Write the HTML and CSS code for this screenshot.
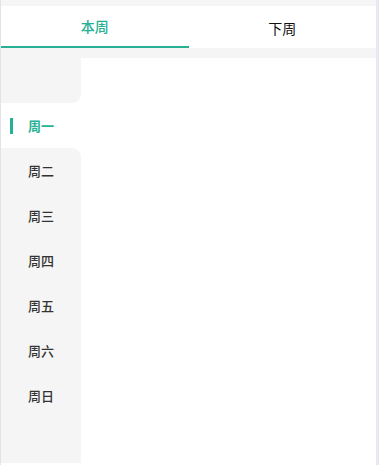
FILE: index.html
```html
<!DOCTYPE html>
<html>
<head>
<meta charset="utf-8">
<link rel="stylesheet" href="styles.css">
</head>
<body>
<div class="app">
  <div class="topgap"></div>
  <div class="tabs">
    <div class="tab active">本周</div>
    <div class="tab">下周</div>
  </div>
  <div class="band"></div>
  <div class="main">
    <div class="side">
      <div class="item pre"></div>
      <div class="item sel">周一</div>
      <div class="item post">周二</div>
      <div class="item">周三</div>
      <div class="item">周四</div>
      <div class="item">周五</div>
      <div class="item">周六</div>
      <div class="item">周日</div>
      <div class="item fill"></div>
    </div>
    <div class="content"></div>
  </div>
</div>
</body>
</html>
```
FILE: styles.css
```css
html, body { margin: 0; padding: 0; background: #fff; }
body { font-family: "Noto Sans CJK SC", "Noto Sans", sans-serif; }
.app {
  width: 379px; height: 465px; box-sizing: border-box;
  border-left: 1px solid #e3e3e3; border-right: 3px solid #e6e9f1;
  display: flex; flex-direction: column; overflow: hidden;
}
.topgap { height: 6px; background: #f5f5f5; flex: none; }
.tabs { height: 42px; display: flex; flex: none; background: #fff; }
.tab {
  flex: 1; display: flex; align-items: center; justify-content: center;
  font-size: 14px; color: #111; box-sizing: border-box; padding-top: 2px;
}
.tab.active { color: #26b195; font-weight: 500; border-bottom: 2px solid #26b195; padding-top: 0; }
.band { height: 10px; background: #f5f5f5; flex: none; }
.main { flex: 1; display: flex; min-height: 0; }
.side { width: 80px; display: flex; flex-direction: column; background: #fff; height: 405px; }
.item {
  height: 45px; flex: none; background: #f5f5f5; display: flex; align-items: center;
  justify-content: center; font-size: 13px; font-weight: 500; color: #333;
}
.item.pre { border-bottom-right-radius: 9px; }
.item.post { border-top-right-radius: 9px; }
.item.sel { background: #fff; color: #26b195; font-weight: 700; position: relative; }
.item.sel::before {
  content: ""; position: absolute; left: 9px; top: 15px; width: 3px; height: 16px; background: #26b195;
}
.item.fill { flex: 1; }
.content { flex: 1; background: #fff; }
```
